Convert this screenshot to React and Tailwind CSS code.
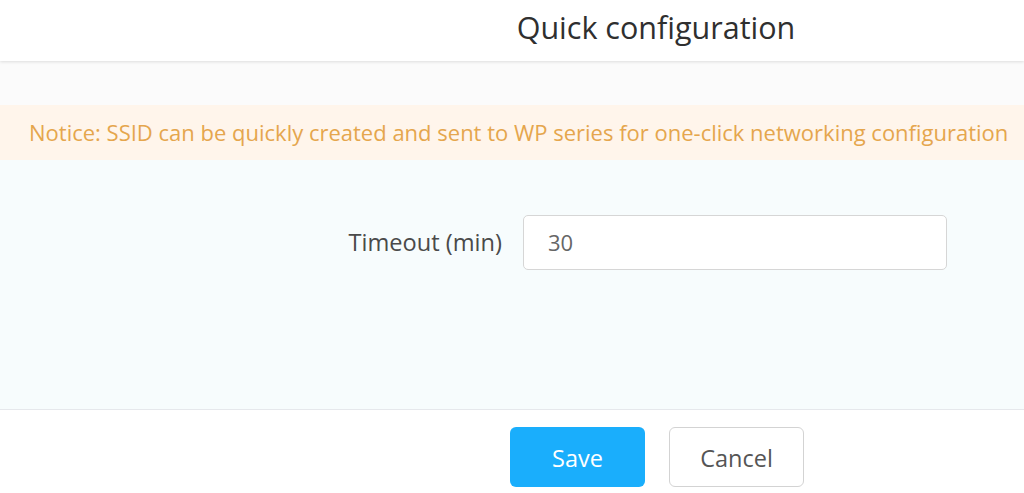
export default function App() {
  return (
    <div className="w-[1024px] h-[493px] flex flex-col bg-white overflow-hidden" style={{ fontFamily: '"Open Sans", sans-serif' }}>
      <div className="h-[61px] shrink-0 flex items-center justify-center pl-[288px] bg-white shadow-[0_1px_3px_rgba(0,0,0,0.12)] relative z-10">
        <h1 className="text-[30.5px] font-medium text-[#2f2f2f] leading-none -mt-[6px]">Quick configuration</h1>
      </div>
      <div className="h-[44px] shrink-0 bg-[#fbfbfb]" />
      <div className="h-[55px] shrink-0 bg-[#fff5eb] flex items-center pl-[29px]">
        <p className="text-[22px] text-[#e5a64d] whitespace-nowrap">Notice: SSID can be quickly created and sent to WP series for one-click networking configuration</p>
      </div>
      <div className="flex-1 bg-[#f7fcfd] border-b border-[#e6e8ec] pt-[55px]">
        <div className="flex items-center">
          <label className="w-[502px] text-right text-[23.6px] text-[#4a4a4a] pr-0">Timeout (min)</label>
          <div className="ml-[21px] w-[424px] h-[55px] bg-white border border-[#d6d6d6] rounded-[5px] flex items-center pl-[24px] text-[22px] text-[#666]">30</div>
        </div>
      </div>
      <div className="h-[83px] shrink-0 bg-white flex items-start pt-[17px] pl-[510px] gap-[24px]">
        <button className="w-[135px] h-[60px] rounded-[6px] bg-[#1aaefc] text-white text-[23.5px] pt-[3px]">Save</button>
        <button className="w-[135px] h-[60px] rounded-[6px] bg-white border border-[#d3d3d3] text-[#555] text-[23.5px] pt-[3px]">Cancel</button>
      </div>
    </div>
  );
}
